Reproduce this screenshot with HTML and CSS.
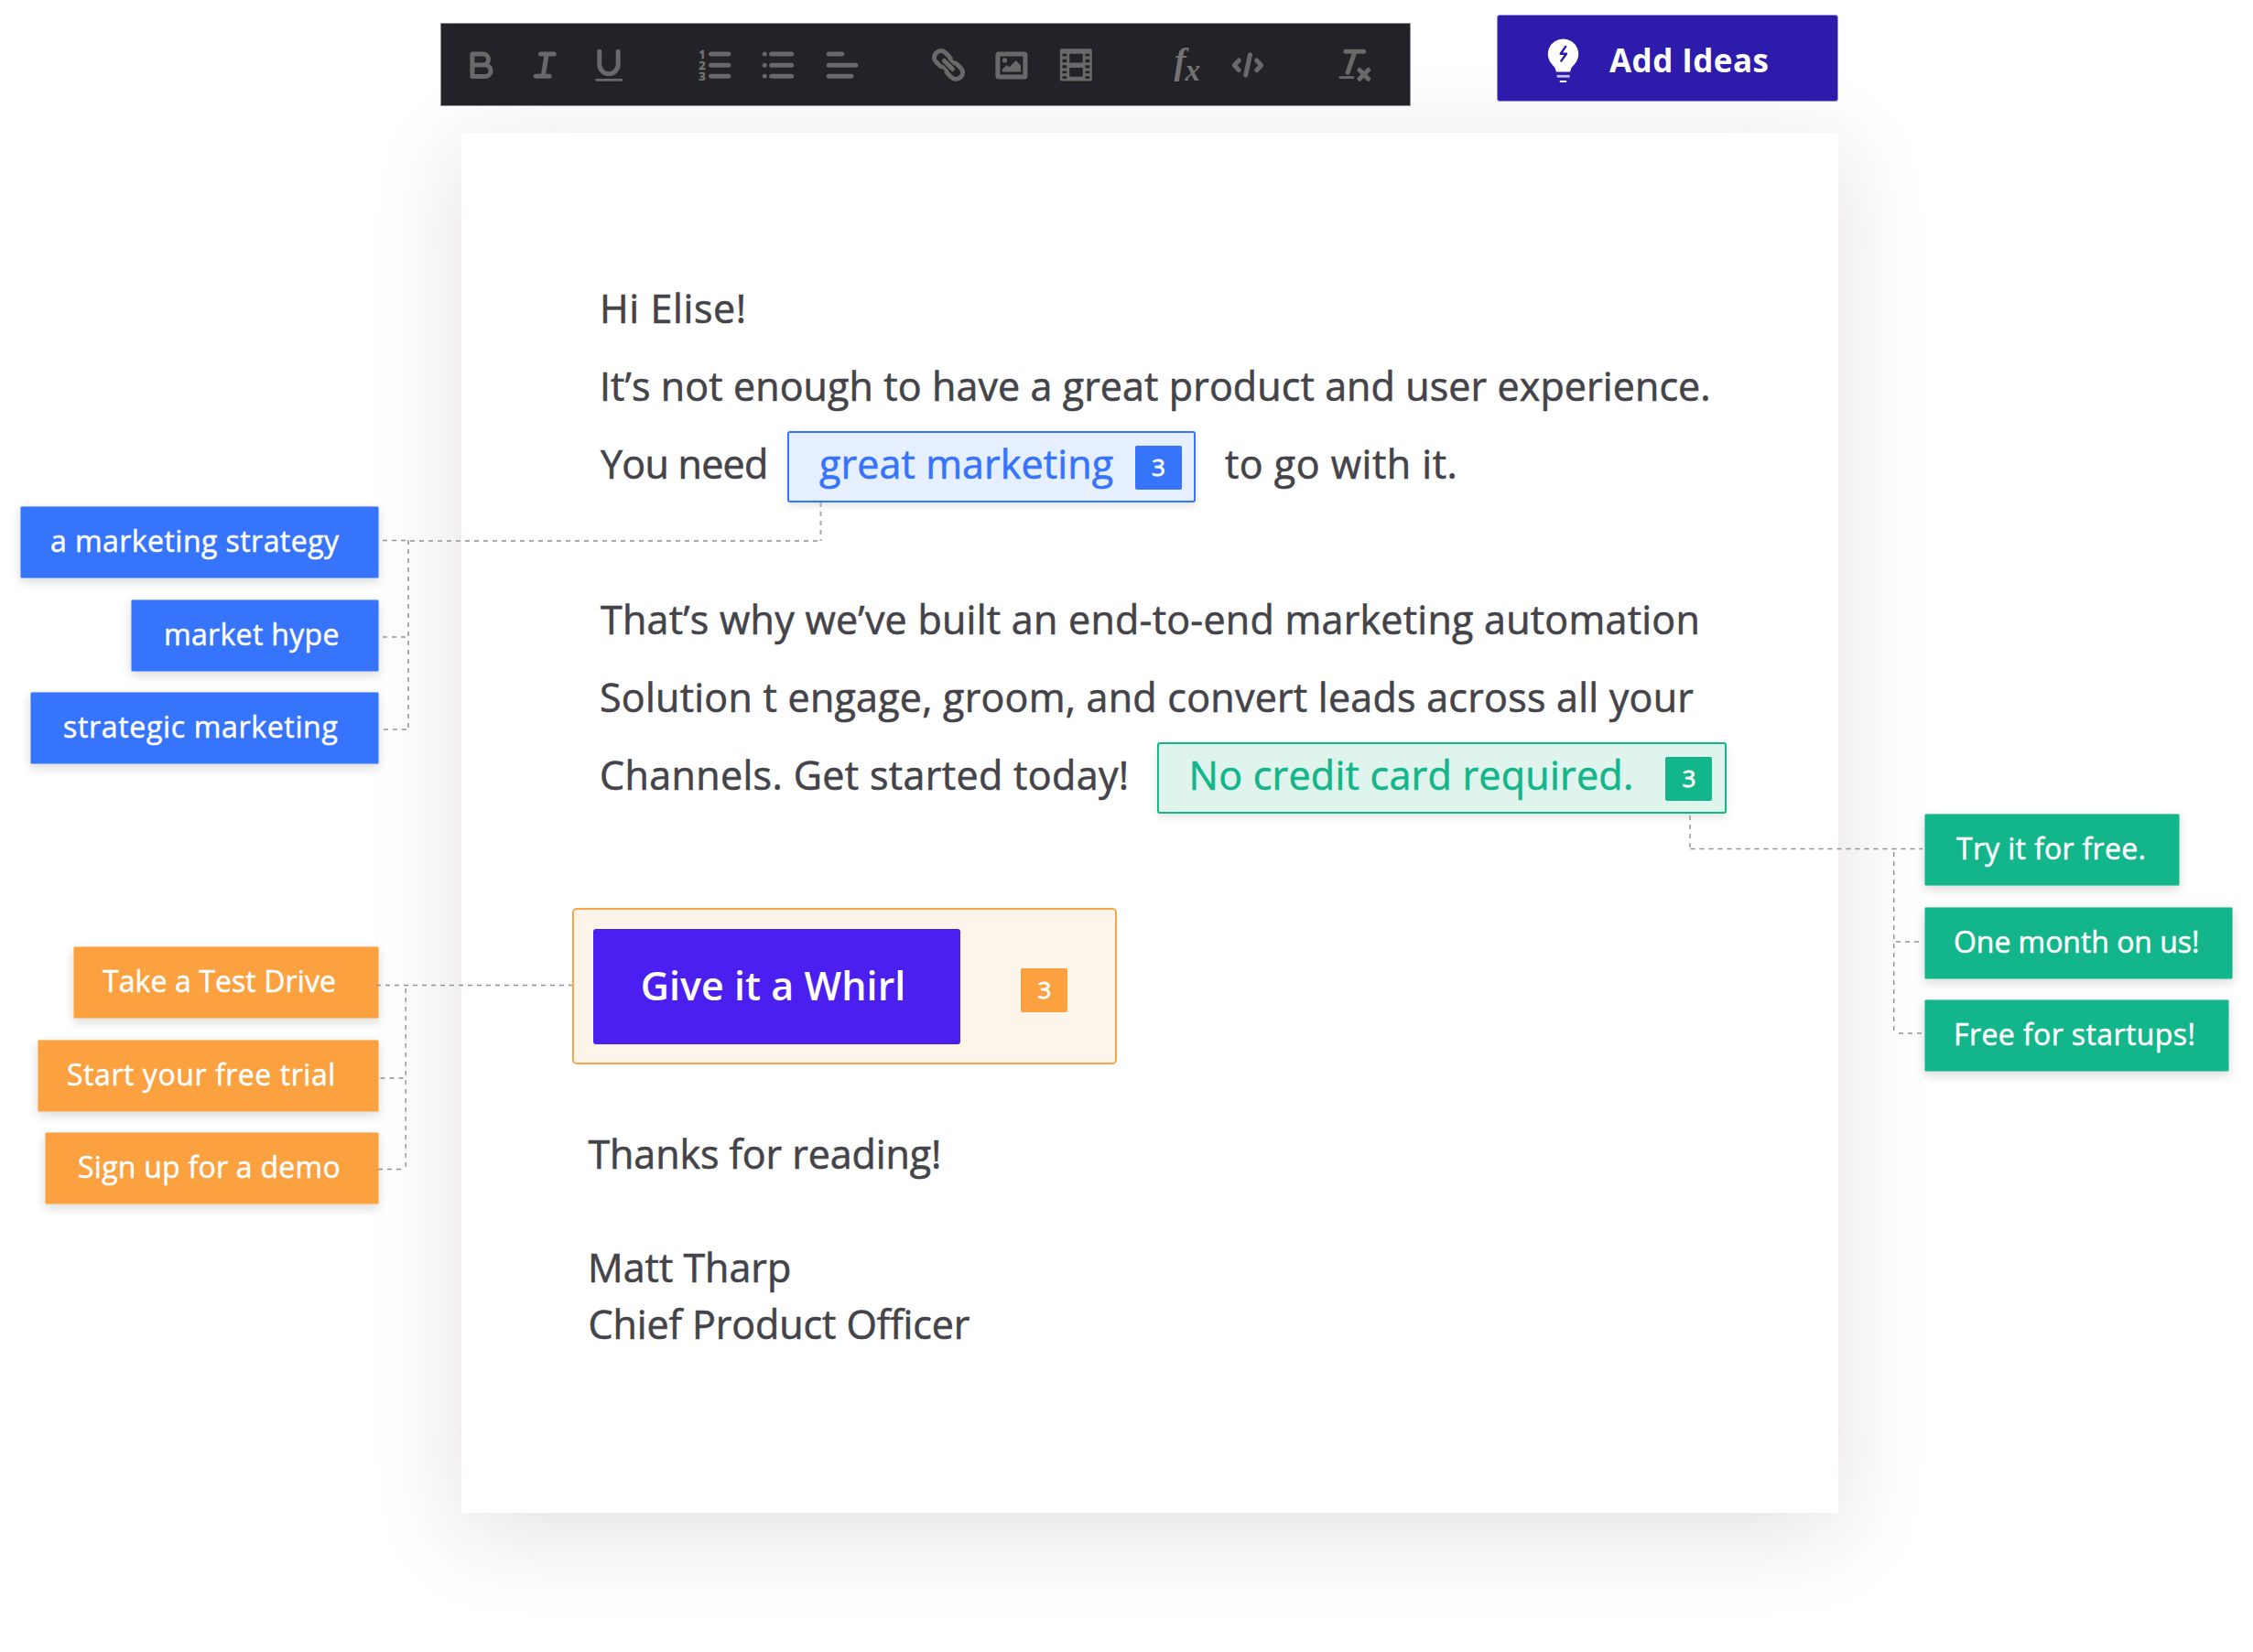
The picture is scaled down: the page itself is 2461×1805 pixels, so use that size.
FILE: index.html
```
<!DOCTYPE html>
<html lang="en">
<head>
<meta charset="utf-8">
<title>Email editor ideas</title>
<link rel="stylesheet" href="styles.css">
</head>
<body>
<div class="stage">
  <header class="topbar">
    <div class="toolbar">
      <div class="tools">
        <svg class="icon" viewBox="0 0 40 40"><path class="s5" d="M9.9 8h11.6a6 6 0 0 1 0 12H9.9M21.5 20h2.3a6.25 6.25 0 0 1 0 12.5H9.9V8"/></svg>
        <svg class="icon" viewBox="0 0 40 40"><path class="s5" d="M15.5 8h14.7M10.2 32.3h14.9M22.2 8l-3.9 24"/></svg>
        <svg class="icon" viewBox="0 0 40 40"><path class="s5" d="M9.8 5.2v14.3a10.2 10.2 0 0 0 20.4 0V5.2"/><path class="s3" d="M6.7 36.3h27.2"/></svg>
      </div>
      <div class="tools tools-list">
        <svg class="icon" viewBox="0 0 40 40"><path class="s5" d="M15.5 8h19.4M15.5 20.2h19.4M15.5 32.3h19.4"/><text class="nums"><tspan x="2.3" y="12.6">1</tspan><tspan x="2.3" y="24.900">2</tspan><tspan x="2.3" y="37.200">3</tspan></text></svg>
        <svg class="icon" viewBox="0 0 40 40"><path class="s5" d="M12.7 8h22M12.7 20.2h22M12.7 32.3h22M5.2 8h.01M5.2 20.2h.01M5.2 32.3h.01"/></svg>
        <svg class="icon" viewBox="0 0 40 40"><path class="s5" d="M5.2 8h14.7M5.2 20.2h29.7M5.2 32.3h24.7"/></svg>
      </div>
      <div class="tools tools-media">
        <svg class="icon" viewBox="0 0 40 40"><g transform="rotate(45 20 20)"><rect class="s5" x="1.200" y="12.800" width="19" height="14.400" rx="6.800"/><rect class="s5" x="19.800" y="12.800" width="19" height="14.400" rx="6.800"/><path class="gap" d="M14 20h12"/><path class="s5" d="M13.500 20h13"/></g></svg>
        <svg class="icon" viewBox="0 0 40 40"><rect class="s5" x="4.9" y="8" width="30" height="25" rx="1"/><circle class="fill" cx="12.5" cy="14.9" r="2.6"/><path class="fill" d="M9.800 27.600v-2.500l5-5 2.600 2.500 7.300-7.500 5.300 5.300v7.200z"/></svg>
        <svg class="icon" viewBox="0 0 40 40"><path class="fill" fill-rule="evenodd" d="M4.800 2.200h31a2 2 0 0 1 2 2v31.300a2 2 0 0 1-2 2h-31a2 2 0 0 1-2-2V4.200a2 2 0 0 1 2-2zM13.200 7.800v9.800h14.500V7.800zM13.200 23v9.800h14.500V23zM5.500 7.800v2.800h4.700V7.800zM5.500 13.800v3.400h4.700v-3.400zM5.500 20.300v3.200h4.700v-3.200zM5.500 26.500v2.800h4.700v-2.800zM5.500 32.200v2.800h4.700v-2.800zM30.500 7.800v2.800h4.700V7.800zM30.500 13.800v3.400h4.700v-3.400zM30.500 20.300v3.200h4.700v-3.200zM30.500 26.500v2.800h4.700v-2.800zM30.500 32.200v2.800h4.700v-2.800z"/></svg>
      </div>
      <div class="tools tools-code">
        <svg class="icon" viewBox="0 0 40 40"><text class="fn"><tspan x="8.500" y="29" font-size="39">f</tspan><tspan x="20.500" y="36.800" font-size="33">x</tspan></text></svg>
        <svg class="icon" viewBox="0 0 40 40"><path class="s5" d="M10.300 15l-5 5.400 5 5.300M29.700 15l5 5.400-5 5.300M22.500 8.900l-4.800 22.200"/></svg>
      </div>
      <div class="tools tools-clear">
        <svg class="icon" viewBox="0 0 40 40"><path class="s5" d="M9.900 5.200h19.800M20 5.200l-7.800 23M25 25.500l9.600 9.800M34.600 25.500L25 35.300"/><path class="s3" d="M4 33.600h14"/></svg>
      </div>
    </div>
    <button class="add-ideas">
      <svg class="bulb" viewBox="0 0 36 50"><path fill="#fff" d="M17.500 1.400a16.700 16.700 0 0 1 11.700 28.600c-2 1.900-2.800 3-3.500 5.500l-.7 1.900H10l-.7-1.900c-.7-2.500-1.500-3.600-3.500-5.500A16.700 16.700 0 0 1 17.500 1.400z"/><path d="M20.200 9.900l-5.500 7.900h6.300l-5.700 7.800" fill="none" stroke="#2d1bab" stroke-width="2.400" stroke-linecap="round" stroke-linejoin="round"/><path d="M10.700 42.300h13.900" stroke="#c4bfe8" stroke-width="2.800"/><path d="M13.800 48h7.400" stroke="#fff" stroke-width="2"/></svg>
      <span>Add Ideas</span>
    </button>
  </header>

  <main class="board">
    <aside class="ideas ideas-left">
      <div class="group blue">
        <div class="chip c-strategy">a marketing strategy</div>
        <div class="chip c-hype">market hype</div>
        <div class="chip c-strategic">strategic marketing</div>
      </div>
      <div class="group orange">
        <div class="chip c-drive">Take a Test Drive</div>
        <div class="chip c-trial">Start your free trial</div>
        <div class="chip c-demo">Sign up for a demo</div>
      </div>
    </aside>

    <article class="letter">
      <p class="line l-hi">Hi Elise!</p>
      <p class="line l-its">It’s not enough to have a great product and user experience.</p>
      <p class="line"><span class="l-you">You need</span><span class="pick pick-blue"><span class="pick-text">great marketing</span><b class="count">3</b></span><span class="l-go">to go with it.</span></p>
      <p class="line l-that para">That’s why we’ve built an end-to-end marketing automation</p>
      <p class="line l-sol">Solution t engage, groom, and convert leads across all your</p>
      <p class="line"><span class="l-chan">Channels. Get started today!</span><span class="pick pick-green"><span class="pick-text">No credit card required.</span><b class="count">3</b></span></p>
      <div class="cta">
        <button class="cta-button">Give it a Whirl</button>
        <b class="count">3</b>
      </div>
      <div class="sign">
        <p class="thanks">Thanks for reading!</p>
        <p class="name">Matt Tharp</p>
        <p class="role">Chief Product Officer</p>
      </div>
    </article>

    <aside class="ideas ideas-right">
      <div class="group green">
        <div class="chip c-try">Try it for free.</div>
        <div class="chip c-month">One month on us!</div>
        <div class="chip c-startups">Free for startups!</div>
      </div>
    </aside>
  </main>

  <svg class="wires" viewBox="0 0 2461 1805">
    <g class="soft">
      <path d="M448 591H896"/><path d="M446 590V796"/>
      <path d="M896.500 549V591"/>
      <path d="M418 696h26"/>
    </g>
    <g class="thin">
      <path d="M418 590.500h28M419 797h26"/>
      <path d="M411 1076.500h214M415.500 1178h27M413 1277.500h30"/><path d="M443.200 1080V1278"/>
      <path d="M1846 891V928"/><path d="M1846.500 927.500H2100"/>
      <path d="M2068.700 931V1129M2071 1029h27M2074 1129h26"/>
    </g>
  </svg>
</div>
</body>
</html>
```
FILE: styles.css
```
* { box-sizing: border-box; }

body {
  margin: 0;
  background: #fff;
  font-family: "Open Sans", "Noto Sans", sans-serif;
  color: #434349;
}

p { margin: 0; }

button {
  border: 0;
  padding: 0;
  font: inherit;
  color: #fff;
}

.stage {
  position: relative;
  width: 2461px;
  height: 1805px;
  overflow: hidden;
}

/* Top bar */
.topbar {
  position: relative;
  z-index: 1;
  display: flex;
  align-items: flex-start;
  height: 145px;
  padding: 16px 0 0 481px;
}

.toolbar {
  display: flex;
  align-items: center;
  width: 1060px;
  height: 91px;
  margin-top: 9px;
  padding-left: 24px;
  background: #222228;
  border: 1px solid #8f9192;
}

.tools { display: flex; gap: 29.3px; }
.tools-list { margin-left: 76.6px; }
.tools-media { margin-left: 76.4px; }
.tools-code { margin-left: 79.4px; }
.tools-clear { margin-left: 76.7px; }

.icon {
  width: 40px;
  height: 40px;
  flex: none;
  overflow: visible;
}

.s5, .s3, .gap {
  fill: none;
  stroke: #696969;
  stroke-width: 5;
  stroke-linecap: round;
  stroke-linejoin: round;
}
.s3 { stroke-width: 2.7; }
.gap { stroke: #222228; stroke-width: 7.5; }
.fill { fill: #696969; }
.nums {
  fill: #757575;
  stroke: #757575;
  stroke-width: .4;
  font: 700 13px "Open Sans", sans-serif;
}
.fn {
  fill: #737373;
  font-family: "Liberation Serif", serif;
  font-style: italic;
  font-weight: 700;
}

.add-ideas {
  display: flex;
  align-items: center;
  width: 373px;
  height: 95px;
  margin-left: 94px;
  padding-left: 54px;
  border: 1px solid #978fd7;
  border-radius: 3px;
  background: #2d1bab;
  font-size: 35px;
  font-weight: 700;
  letter-spacing: .43px;
  white-space: nowrap;
}
.add-ideas span { margin: 3px 0 0 32px; }

.bulb { width: 36px; height: 50px; margin-top: 4px; }

/* Board columns */
.board {
  display: grid;
  grid-template-columns: 414px 1504px 359px;
  column-gap: 90px;
}

.ideas-left { padding-top: 408px; }
.ideas-right { padding-top: 744px; margin-left: 4px; }

.group {
  display: flex;
  flex-direction: column;
  gap: 22.500px;
}
.ideas-left .group { align-items: flex-end; }
.ideas-right .group { align-items: flex-start; }

.chip {
  height: 79px;
  border: 1px solid;
  border-radius: 2px;
  box-shadow: 0 4px 12px rgba(0, 0, 0, .15);
  color: #fff;
  font-size: 32px;
  line-height: 74px;
  white-space: nowrap;
  -webkit-text-stroke: .5px #fff;
}
.blue .chip { background: #3574fb; border-color: #8aadfa; }
.orange { margin-top: 199px; }
.orange .chip { background: #fba140; border-color: #f9c68e; }
.green .chip { background: #13b58a; border-color: #79d0b6; }

.c-strategy { width: 392px; padding-left: 32px; letter-spacing: .45px; }
.c-hype { width: 271px; padding-left: 35px; letter-spacing: .33px; }
.c-strategic { width: 381px; padding-left: 35px; letter-spacing: .67px; }
.c-drive { width: 334px; padding-left: 31px; letter-spacing: .09px; }
.c-trial { width: 373px; padding-left: 31px; letter-spacing: .55px; }
.c-demo { width: 365px; padding-left: 35px; letter-spacing: .25px; }
.c-try { width: 279px; padding-left: 34px; letter-spacing: .3px; }
.c-month { width: 337px; padding-left: 31px; letter-spacing: -.05px; }
.c-startups { width: 333px; padding-left: 31px; letter-spacing: .4px; }

/* Letter sheet */
.letter {
  height: 1508px;
  padding: 149px 0 0 151px;
  border-radius: 3px;
  background: #fff;
  box-shadow: 0 20px 100px rgba(70, 42, 40, .15);
  font-size: 43px;
  -webkit-text-stroke: .6px;
}

.line {
  display: flex;
  height: 85px;
  line-height: 85px;
  white-space: nowrap;
}
.para { margin-top: 85px; }

.l-hi { letter-spacing: .600px; }
.l-its { letter-spacing: .100px; }
.l-you { width: 205px; padding-left: 1px; letter-spacing: -.730px; }
.l-go { padding-left: 32px; letter-spacing: .500px; }
.l-that { padding-left: 1px; letter-spacing: .250px; }
.l-sol { letter-spacing: .250px; }
.l-chan { width: 609px; letter-spacing: .360px; }

.pick {
  display: flex;
  align-items: flex-start;
  height: 78px;
  margin-top: 7px;
  border: 2px solid;
  border-radius: 3px;
  box-shadow: 0 4px 8px rgba(0, 0, 0, .1);
}
.pick-text { margin-top: -9px; }
.pick-blue {
  width: 446px;
  padding-left: 33px;
  color: #3574fb;
  background: #e6effe;
}
.pick-blue .pick-text { width: 344.500px; letter-spacing: .120px; }
.pick-blue .count { background: #3574fb; }
.pick-green {
  width: 622px;
  padding-left: 32.500px;
  color: #13b58a;
  background: #e0f4ee;
}
.pick-green .pick-text { width: 520.500px; letter-spacing: .270px; }
.pick-green .count { background: #13b58a; margin-top: 14px; }

.count {
  width: 51px;
  height: 48px;
  margin-top: 13.500px;
  padding-left: 1px;
  border-radius: 2px;
  color: #fff;
  font-size: 26px;
  font-weight: 400;
  line-height: 46px;
  text-align: center;
  -webkit-text-stroke: .8px #fff;
}

.cta {
  display: flex;
  width: 595px;
  height: 171px;
  margin: 103px 0 0 -30px;
  padding: 21px 0 0 21px;
  border: 2px solid #fba548;
  border-radius: 5px;
  background: #fef5ea;
}
.cta-button {
  width: 401px;
  height: 126px;
  padding: 0 8px 4px 0;
  border-radius: 3px;
  background: #4c1ff1;
  font-weight: 600;
  letter-spacing: .050px;
  -webkit-text-stroke: 0;
}
.cta .count {
  margin: 43px 0 0 66px;
  background: #fba140;
}

.sign { margin: 67px 0 0 -13px; line-height: 62px; }
.name { margin-top: 62px; }
.thanks, .role { letter-spacing: -.090px; }
.thanks, .role { padding-left: .5px; }

/* Connector lines lie over the sheet and its margins */
.wires {
  position: absolute;
  inset: 0;
  width: 2461px;
  height: 1805px;
  pointer-events: none;
  fill: none;
  stroke-dasharray: 5 5;
}
.soft { stroke: #ababab; stroke-width: 2; }
.thin { stroke: #929292; stroke-width: 1.400; }
```
